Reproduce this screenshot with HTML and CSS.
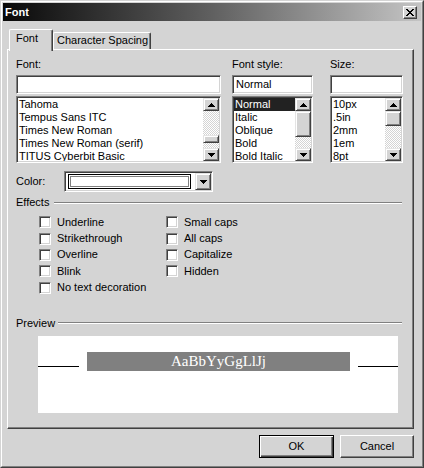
FILE: index.html
```html
<!DOCTYPE html>
<html>
<head>
<meta charset="utf-8">
<title>Font</title>
<link rel="stylesheet" href="styles.css">
</head>
<body>
<div class="window">
  <div class="frame">
    <div class="titlebar">
      <span class="title">Font</span>
      <div class="close">
        <svg width="8" height="7" viewBox="0 0 8 7"><path d="M0 0h2v1H0zM6 0h2v1H6zM1 1h2v1H1zM5 1h2v1H5zM2 2h4v1H2zM3 3h2v1H3zM2 4h4v1H2zM1 5h2v1H1zM5 5h2v1H5zM0 6h2v1H0zM6 6h2v1H6z" fill="#000"/></svg>
      </div>
    </div>
    <div class="content">
      <div class="tabs">
        <div class="tab selected">Font</div>
        <div class="tab other">Character Spacing</div>
      </div>
      <div class="panel">
        <div class="pickers">
          <div class="picker p-font">
            <div class="label">Font:</div>
            <div class="input"></div>
            <div class="list">
              <ul class="items">
                <li>Tahoma</li>
                <li>Tempus Sans ITC</li>
                <li>Times New Roman</li>
                <li>Times New Roman (serif)</li>
                <li>TITUS Cyberbit Basic</li>
              </ul>
              <div class="scrollbar">
                <div class="sb-btn"><svg width="7" height="4" viewBox="0 0 7 4"><path d="M3 0h1v1h1v1h1v1h1v1H0V3h1V2h1V1h1z" fill="#000"/></svg></div>
                <div class="track"><div class="thumb" style="margin-top:24px;height:8px"></div></div>
                <div class="sb-btn"><svg width="7" height="4" viewBox="0 0 7 4"><path d="M0 0h7v1H6v1H5v1H4v1H3V3H2V2H1V1H0z" fill="#000"/></svg></div>
              </div>
            </div>
          </div>
          <div class="picker p-style">
            <div class="label">Font style:</div>
            <div class="input">Normal</div>
            <div class="list">
              <ul class="items">
                <li class="sel">Normal</li>
                <li>Italic</li>
                <li>Oblique</li>
                <li>Bold</li>
                <li>Bold Italic</li>
              </ul>
              <div class="scrollbar">
                <div class="sb-btn"><svg width="7" height="4" viewBox="0 0 7 4"><path d="M3 0h1v1h1v1h1v1h1v1H0V3h1V2h1V1h1z" fill="#000"/></svg></div>
                <div class="track"><div class="thumb" style="margin-top:0;height:26px"></div></div>
                <div class="sb-btn"><svg width="7" height="4" viewBox="0 0 7 4"><path d="M0 0h7v1H6v1H5v1H4v1H3V3H2V2H1V1H0z" fill="#000"/></svg></div>
              </div>
            </div>
          </div>
          <div class="picker p-size">
            <div class="label">Size:</div>
            <div class="input"></div>
            <div class="list">
              <ul class="items">
                <li>10px</li>
                <li>.5in</li>
                <li>2mm</li>
                <li>1em</li>
                <li>8pt</li>
              </ul>
              <div class="scrollbar">
                <div class="sb-btn"><svg width="7" height="4" viewBox="0 0 7 4"><path d="M3 0h1v1h1v1h1v1h1v1H0V3h1V2h1V1h1z" fill="#000"/></svg></div>
                <div class="track"><div class="thumb" style="margin-top:0;height:15px"></div></div>
                <div class="sb-btn"><svg width="7" height="4" viewBox="0 0 7 4"><path d="M0 0h7v1H6v1H5v1H4v1H3V3H2V2H1V1H0z" fill="#000"/></svg></div>
              </div>
            </div>
          </div>
        </div>

        <div class="color-row">
          <div class="color-label">Color:</div>
          <div class="combo">
            <div class="field"><div class="swatch"><div class="swatch-fill"></div></div></div>
            <div class="dd-btn"><svg width="7" height="4" viewBox="0 0 7 4"><path d="M0 0h7v1H6v1H5v1H4v1H3V3H2V2H1V1H0z" fill="#000"/></svg></div>
          </div>
        </div>

        <div class="group-hdr">
          <span>Effects</span>
          <div class="hdr-line"></div>
        </div>
        <div class="checks">
          <div class="col col1">
            <div class="check"><span class="box"></span>Underline</div>
            <div class="check"><span class="box"></span>Strikethrough</div>
            <div class="check"><span class="box"></span>Overline</div>
            <div class="check"><span class="box"></span>Blink</div>
            <div class="check"><span class="box"></span>No text decoration</div>
          </div>
          <div class="col col2">
            <div class="check"><span class="box"></span>Small caps</div>
            <div class="check"><span class="box"></span>All caps</div>
            <div class="check"><span class="box"></span>Capitalize</div>
            <div class="check"><span class="box"></span>Hidden</div>
          </div>
        </div>

        <div class="group-hdr preview-hdr">
          <span>Preview</span>
          <div class="hdr-line"></div>
        </div>
        <div class="preview">
          <div class="pv-line"></div>
          <div class="pv-sample">AaBbYyGgLlJj</div>
          <div class="pv-line pv-right"></div>
        </div>
      </div>
      <div class="buttons">
        <div class="btn default">OK</div>
        <div class="btn">Cancel</div>
      </div>
    </div>
  </div>
</div>
</body>
</html>
```

FILE: styles.css
```css
* { box-sizing: border-box; }
html, body { margin: 0; padding: 0; }
body {
  width: 424px;
  height: 468px;
  overflow: hidden;
  background: #d4d4d4;
  font-family: "Liberation Sans", Arial, sans-serif;
  font-size: 11px;
  line-height: 13px;
  color: #000;
}
.window {
  width: 424px;
  height: 468px;
  border: 1px solid;
  border-color: #d4d4d4 #404040 #404040 #d4d4d4;
  background: #d4d4d4;
}
.frame {
  height: 100%;
  border: 1px solid;
  border-color: #fff #808080 #808080 #fff;
  padding: 1px;
  display: flex;
  flex-direction: column;
}
.titlebar {
  height: 18px;
  flex: none;
  display: flex;
  align-items: center;
  justify-content: space-between;
  padding: 0 4px 0 2px;
  background: linear-gradient(to right, #080808, #606060 50%, #c4c4c4);
}
.title {
  color: #fff;
  font-weight: bold;
  font-size: 11px;
  line-height: 18px;
}
.close {
  width: 14px;
  height: 13px;
  display: flex;
  align-items: center;
  justify-content: center;
  background: #d4d4d4;
  border: 1px solid;
  border-color: #fff #404040 #404040 #fff;
  box-shadow: inset -1px -1px #808080;
}
.content {
  flex: 1;
  display: flex;
  flex-direction: column;
  padding: 8px 7px 0 4px;
}
.tabs {
  display: flex;
  height: 20px;
  padding-left: 2px;
  align-items: flex-start;
  position: relative;
  z-index: 1;
}
.tab {
  background: #d4d4d4;
  border-top: 1px solid #fff;
  border-left: 1px solid #fff;
  border-right: 1px solid #404040;
  box-shadow: inset -1px 0 #808080;
  border-radius: 2px 2px 0 0;
  white-space: nowrap;
}
.tab.selected {
  width: 44px;
  height: 22px;
  padding: 2px 0 0 6px;
}
.tab.other {
  width: 98px;
  height: 17px;
  margin-top: 3px;
  padding: 1px 0 0 3px;
}
.panel {
  height: 380px;
  flex: none;
  border-top: 1px solid #fff;
  border-left: 1px solid #fff;
  border-right: 1px solid #404040;
  border-bottom: 1px solid #404040;
  box-shadow: inset -1px -1px #808080;
  padding: 8px 9px 0 8px;
}
.pickers { display: flex; }
.picker { display: flex; flex-direction: column; }
.p-font { width: 205px; }
.p-style { width: 81px; margin-left: 11px; }
.p-size { width: 73px; margin-left: 17px; }
.label { height: 13px; margin-bottom: 4px; white-space: nowrap; }
.input {
  height: 19px;
  background: #fff;
  border: 1px solid;
  border-color: #808080 #fff #fff #808080;
  box-shadow: inset 1px 1px #404040, inset -1px -1px #d4d4d4;
  padding: 2px 3px;
  white-space: nowrap;
}
.list {
  margin-top: 2px;
  height: 67px;
  display: flex;
  background: #fff;
  border: 1px solid;
  border-color: #808080 #fff #fff #808080;
  box-shadow: inset 1px 1px #404040, inset -1px -1px #d4d4d4;
  padding: 1px;
}
.items {
  flex: 1;
  margin: 0;
  padding: 0;
  list-style: none;
  overflow: hidden;
}
.items li {
  height: 13px;
  padding-left: 1px;
  white-space: nowrap;
}
.items li.sel {
  background: #222;
  color: #fff;
}
.scrollbar {
  width: 16px;
  flex: none;
  display: flex;
  flex-direction: column;
}
.sb-btn, .thumb, .dd-btn {
  background: #d4d4d4;
  border: 1px solid;
  border-color: #e4e4e4 #404040 #404040 #e4e4e4;
  box-shadow: inset 1px 1px #fff, inset -1px -1px #808080;
}
.sb-btn {
  height: 13px;
  flex: none;
  display: flex;
  align-items: center;
  justify-content: center;
}
.track {
  flex: 1;
  display: flex;
  flex-direction: column;
  background-color: #ececec;
  background-image: repeating-conic-gradient(#fff 0 25%, #d4d4d4 0 50%);
  background-size: 2px 2px;
}
.thumb { flex: none; }
.color-row {
  display: flex;
  align-items: center;
  margin-top: 8px;
  height: 21px;
}
.color-label { width: 48px; }
.combo {
  width: 149px;
  height: 21px;
  display: flex;
  background: #fff;
  border: 1px solid;
  border-color: #808080 #fff #fff #808080;
  box-shadow: inset 1px 1px #404040, inset -1px -1px #d4d4d4;
  padding: 1px;
}
.field {
  flex: 1;
  padding: 1px 4px 1px 2px;
}
.swatch {
  height: 100%;
  border: 1px solid #000;
  padding: 1px;
  background: #fff;
}
.swatch-fill {
  height: 100%;
  border: 1px solid #808080;
  background: #fff;
}
.dd-btn {
  width: 16px;
  flex: none;
  display: flex;
  align-items: center;
  justify-content: center;
}
.group-hdr {
  display: flex;
  align-items: center;
  height: 13px;
  margin-top: 4px;
}
.hdr-line {
  flex: 1;
  height: 2px;
  margin-left: 5px;
  margin-right: 2px;
  border-top: 1px solid #808080;
  border-bottom: 1px solid #fff;
}
.checks {
  display: flex;
  margin-top: 5px;
  padding-left: 23px;
}
.col1 { width: 127px; }
.check {
  display: flex;
  align-items: center;
  height: 16.4px;
  white-space: nowrap;
}
.box {
  width: 12px;
  height: 12px;
  flex: none;
  margin-right: 6px;
  background: #fff;
  border: 1px solid;
  border-color: #808080 #fff #fff #808080;
  box-shadow: inset 1px 1px #404040, inset -1px -1px #d4d4d4;
}
.preview-hdr { margin-top: 21px; }
.preview-hdr .hdr-line { margin-left: 3px; }
.preview {
  margin: 6px 0 0 22px;
  width: 360px;
  height: 77px;
  background: #fff;
  display: flex;
  align-items: flex-start;
  padding-top: 16px;
}
.pv-line {
  width: 41px;
  height: 1px;
  margin-top: 14px;
  background: #000;
  flex: none;
}
.pv-right { flex: 1; width: auto; }
.pv-sample {
  width: 263px;
  height: 19px;
  margin: 0 8px;
  background: #808080;
  color: #fff;
  font-family: "Liberation Serif", "Times New Roman", serif;
  font-size: 15px;
  line-height: 19px;
  text-align: center;
  flex: none;
}
.buttons {
  display: flex;
  justify-content: flex-end;
  gap: 6px;
  margin-top: 6px;
}
.btn {
  width: 74px;
  height: 23px;
  display: flex;
  align-items: center;
  justify-content: center;
  background: #d4d4d4;
  border: 1px solid;
  border-color: #fff #404040 #404040 #fff;
  box-shadow: inset -1px -1px #808080;
}
.btn.default {
  width: 75px;
  border-color: #000;
  box-shadow: inset 1px 1px #fff, inset -1px -1px #404040, inset -2px -2px #808080;
}
```
